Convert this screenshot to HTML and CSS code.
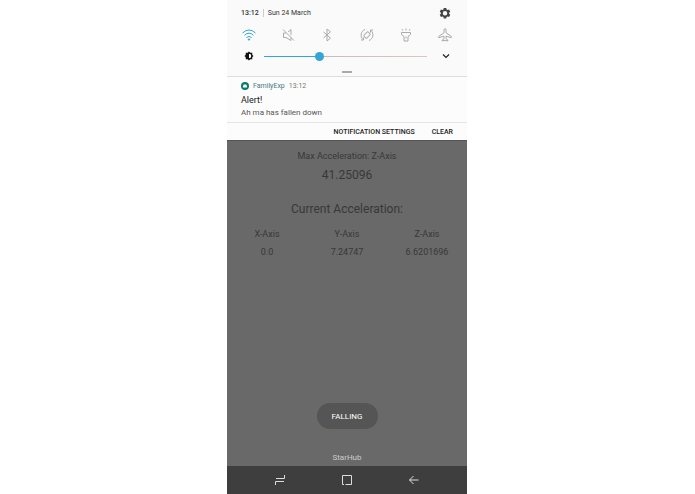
FILE: index.html
```html
<!DOCTYPE html>
<html lang="en">
<head>
  <meta charset="UTF-8">
  <meta name="viewport" content="width=device-width, initial-scale=1.0">
  <title>FamilyExp</title>
  <link rel="stylesheet" href="styles.css">
</head>
<body>
  <div class="phone">
    <header class="panel">
      <div class="status">
        <span class="clock">13:12</span>
        <span class="date">Sun 24 March</span>
        <button class="icon-btn settings" aria-label="Settings">
          <svg width="12" height="12" viewBox="0 0 24 24" fill="#444"><path fill-rule="evenodd" d="M9.500 2h5l.6 3 2 1.200 3-1 2.400 4.200-2.300 2v2.300l2.300 2-2.400 4.200-3-1-2 1.200-.6 3h-5l-.6-3-2-1.200-3 1-2.400-4.200 2.300-2v-2.300l-2.300-2 2.400-4.200 3 1 2-1.200zM12 8a4.500 4.500 0 1 0 0 9 4.500 4.500 0 0 0 0-9z"/></svg>
        </button>
      </div>

      <div class="toggles">
        <button class="icon-btn on" aria-label="Wi-Fi">
          <svg width="14" height="14" viewBox="0 0 14 14"><path d="M.5 5Q7-1 13.500 5M2.500 7.300Q7 3 11.500 7.300M4.500 9.500Q7 7.300 9.500 9.500"/><circle cx="7" cy="11.500" r=".7" fill="currentColor"/></svg>
        </button>
        <button class="icon-btn" aria-label="Sound">
          <svg width="14" height="14" viewBox="0 0 14 14"><path d="M2 1.500l11 11M5 5H2.500v4.500H5L10 12.500V9.500M7 4l3-2.500V7"/></svg>
        </button>
        <button class="icon-btn" aria-label="Bluetooth">
          <svg width="14" height="14" viewBox="0 0 14 14"><path d="M3.500 4l7 6.200L7 13V1l3.500 2.800-7 6.200"/></svg>
        </button>
        <button class="icon-btn" aria-label="Auto rotate">
          <svg width="14" height="14" viewBox="0 0 14 14"><path d="M5 1.500a6 6 0 0 0-2 10M1 12h2.500V9.500M9 12.500a6 6 0 0 0 2-10M13 2h-2.500v2.500"/><rect x="4" y="5" width="6" height="4" rx="1" transform="rotate(-45 7 7)"/></svg>
        </button>
        <button class="icon-btn" aria-label="Flashlight">
          <svg width="14" height="14" viewBox="0 0 14 14"><path d="M2.500 4.500h9v2L9 8.500v4.500H5V8.500L2.500 6.500zM7 8.500v2M7 .5v2M3 1l.7 1.500M11 1l-.7 1.500"/></svg>
        </button>
        <button class="icon-btn" aria-label="Flight mode">
          <svg width="14" height="14" viewBox="0 0 14 14"><path d="M7 .7q1 0 1 1.500v2.600l5.300 3.600v1.300L8 8.200v2.500l1.800 1.300v1L7 12.300l-2.800.7v-1L6 10.700V8.200L.7 9.700V8.400L6 4.800V2.200q0-1.500 1-1.500z"/></svg>
        </button>
      </div>

      <div class="brightness">
        <svg class="bright-icon" width="10" height="10" viewBox="0 0 20 20"><path d="M10 1l2.700 2.500h3.800v3.800L19 10l-2.500 2.700v3.800h-3.800L10 19l-2.700-2.500H3.500v-3.800L1 10l2.500-2.700V3.500h3.800z" fill="#111"/><path d="M10 5.500a4.500 4.500 0 0 1 0 9z" fill="#fff"/></svg>
        <input class="slider" type="range" min="0" max="100" value="33" aria-label="Brightness">
        <button class="icon-btn more" aria-label="More">
          <svg width="8" height="8" viewBox="0 0 8 8"><path d="M1 2.500l3 3 3-3" fill="none" stroke="#222" stroke-width="1.200"/></svg>
        </button>
      </div>
      <div class="handle"></div>
    </header>

    <section class="notification">
      <div class="app">
        <svg width="8" height="8" viewBox="0 0 8 8"><circle cx="4" cy="4" r="4" fill="#0b7a6c"/><path d="M2 5.500V4l.8-1.500h2.400L6 4v1.500z" fill="#fff"/></svg>
        <span class="app-name">FamilyExp</span>
        <span>13:12</span>
      </div>
      <h1 class="alert">Alert!</h1>
      <p class="message">Ah ma has fallen down</p>
    </section>
    <div class="actions">
      <button>NOTIFICATION SETTINGS</button>
      <button>CLEAR</button>
    </div>

    <main class="app-screen">
      <p class="label">Max Acceleration: Z-Axis</p>
      <p class="max">41.25096</p>
      <h2 class="current">Current Acceleration:</h2>
      <table class="axes">
        <tr><th>X-Axis</th><th>Y-Axis</th><th>Z-Axis</th></tr>
        <tr><td>0.0</td><td>7.24747</td><td>6.6201696</td></tr>
      </table>
      <button class="falling">FALLING</button>
      <p class="carrier">StarHub</p>
    </main>

    <nav class="navbar">
      <button class="icon-btn" aria-label="Recent apps">
        <svg width="12" height="12" viewBox="0 0 12 12"><path d="M1.500 11V7.500H10M10.500 1v3.500H2"/></svg>
      </button>
      <button class="icon-btn" aria-label="Home">
        <svg width="12" height="12" viewBox="0 0 12 12"><path d="M1.500 9V1.500h9V9M1.500 9v1.500H3M4.500 10.500h6V9"/></svg>
      </button>
      <button class="icon-btn" aria-label="Back">
        <svg width="12" height="12" viewBox="0 0 12 12"><path d="M10.500 6h-9M5.500 2l-4 4 4 4"/></svg>
      </button>
    </nav>
  </div>
</body>
</html>
```
FILE: styles.css
```css
* {
  box-sizing: border-box;
}
body {
  margin: 0;
  padding-right: 1px;
  background: white;
  font-family: Roboto, sans-serif;
  font-size: 8px;
  color: #333;
}
h1, h2, p {
  margin: 0;
  font-weight: normal;
}
button {
  border: none;
  padding: 0;
  background: none;
  font-family: inherit;
  cursor: pointer;
}
svg {
  display: block;
}
.phone {
  display: flex;
  flex-direction: column;
  max-width: 240px;
  min-height: 100vh;
  margin: 0 auto;
  background: #696969;
}

/* quick settings */
.panel {
  padding: 7px 14px 3px;
  background: #fafafa;
  border-bottom: 1px solid #ddd;
}
.status {
  display: flex;
  align-items: center;
  height: 12px;
  font-size: 7px;
}
.clock {
  padding-right: 4px;
  font-weight: 500;
}
.date {
  padding-left: 4px;
  border-left: 1px solid #ccc;
}
.settings {
  margin-left: auto;
  margin-right: 2px;
}
.toggles {
  display: flex;
  justify-content: space-between;
  margin-top: 9px;
  padding: 0 1px;
}
.toggles svg {
  fill: none;
  stroke: currentColor;
}
.toggles .icon-btn {
  color: #aaa;
}
.toggles .on {
  color: #35a5d5;
}
.brightness {
  display: flex;
  align-items: center;
  height: 14px;
  margin-top: 7px;
  padding: 0 3px;
}
.slider {
  flex: 1;
  min-width: 0;
  height: 10px;
  margin: 0 15px 0 10px;
  appearance: none;
  background: linear-gradient(to right, #35a5d5 33%, #c4bcbc 33%, #e0c4c0) center / 100% 1px no-repeat;
}
.slider::-webkit-slider-thumb {
  appearance: none;
  width: 9px;
  height: 9px;
  border-radius: 50%;
  background: #35a5d5;
}
.handle {
  width: 10px;
  height: 2px;
  margin: 8px auto 0;
  background: #aaa;
}

/* notification */
.notification {
  padding: 3px 14px;
  background: #fcfcfc;
  border-bottom: 1px solid #e6e6e6;
}
.app {
  display: flex;
  align-items: center;
  gap: 4px;
  height: 12px;
  font-size: 7px;
  color: #777;
}
.app-name {
  color: #467a80;
}
.alert {
  margin-top: 2px;
  font-size: 9px;
  line-height: 12px;
  color: #222;
}
.message {
  margin-top: 1px;
  line-height: 12px;
  color: #555;
}
.actions {
  display: flex;
  justify-content: flex-end;
  gap: 17px;
  height: 17px;
  padding-right: 14px;
  background: #fcfcfc;
}
.actions button {
  font-size: 7px;
  font-weight: 500;
  color: #222;
}

/* app behind the panel */
.app-screen {
  flex: 1;
  display: flex;
  flex-direction: column;
  align-items: center;
  padding: 9px 0 2px;
  border-top: 1px solid #555;
  color: #383838;
}
.label {
  font-size: 9px;
  line-height: 12px;
}
.max {
  margin-top: 5px;
  font-size: 12px;
  line-height: 16px;
}
.current {
  margin-top: 18px;
  font-size: 12px;
  line-height: 16px;
}
.axes {
  width: 100%;
  margin-top: 8px;
  table-layout: fixed;
  border-collapse: collapse;
  font-size: 9px;
  text-align: center;
}
.axes th,
.axes td {
  height: 18px;
  padding: 0;
  font-weight: normal;
}
.falling {
  width: 61px;
  height: 26px;
  margin-top: auto;
  border-radius: 13px;
  background: #555;
  font-size: 8px;
  color: #fff;
}
.carrier {
  margin-top: 23px;
  font-size: 8px;
  line-height: 12px;
  color: #ccc;
}
.navbar {
  display: flex;
  justify-content: center;
  gap: 55px;
  height: 28px;
  background: #3e3e3e;
}
.navbar svg {
  fill: none;
  stroke: #ddd;
}
```
